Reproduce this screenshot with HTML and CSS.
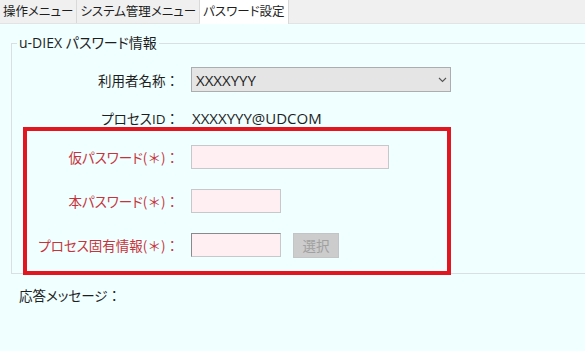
FILE: index.html
```html
<!DOCTYPE html>
<html lang="ja">
<head>
    <meta charset="UTF-8">
    <title>パスワード設定</title>
    <link rel="stylesheet" href="styles.css">
</head>
<body>
    <div class="tabs">
        <div class="tab">操作メニュー</div>
        <div class="tab">システム管理メニュー</div>
        <div class="tab active">パスワード設定</div>
    </div>
    <div class="page">
        <fieldset class="group">
            <legend>u-DIEX パスワード情報</legend>
            <div class="row first">
                <label class="label">利用者名称<span class="mark">：</span></label>
                <div class="select">
                    <span class="value">XXXXYYY</span>
                    <svg width="9" height="6" viewBox="0 0 9 6"><path d="M1 1l3.5 3.5L8 1" fill="none" stroke="#555" stroke-width="1.1"/></svg>
                </div>
            </div>
            <div class="row info">
                <span class="label">プロセスID<span class="mark">：</span></span>
                <span class="value">XXXXYYY@UDCOM</span>
            </div>
            <div class="required">
                <div class="row">
                    <label class="label red">仮パスワード<span class="mark">(＊)：</span></label>
                    <input class="input wide" type="password">
                </div>
                <div class="row">
                    <label class="label red">本パスワード<span class="mark">(＊)：</span></label>
                    <input class="input" type="password">
                </div>
                <div class="row">
                    <label class="label red">プロセス固有情報<span class="mark">(＊)：</span></label>
                    <input class="input inset" type="text">
                    <button class="btn" disabled>選択</button>
                </div>
            </div>
        </fieldset>
        <div class="message">応答メッセージ<span class="mark">：</span></div>
    </div>
</body>
</html>
```

FILE: styles.css
```css
/* password settings screen */
body {
    margin: 0;
    background-color: #f0ffff;
    color: #1e1e1e;
    font-family: "Open Sans", "Noto Sans CJK JP", sans-serif;
    font-size: 13.5px;
    font-feature-settings: "palt";
}

.tabs {
    display: flex;
    height: 23px;
    background-color: #f0f0f0;
    border-bottom: 1px solid #e3e3e3;
    font-size: 12.5px;
}

.tab {
    padding: 0 3px;
    line-height: 23px;
    border-right: 1px solid #d9d9d9;
}

.tab.active {
    background-color: #ffffff;
    height: 24px;
}

.page {
    padding: 0 0 0 11px;
}

.group {
    margin: 11px 0 0 0;
    padding: 0;
    border: 1px solid #d9e0e3;
    border-right: none;
    min-width: 0;
}

.group legend {
    padding: 0 2px;
    margin-left: 5px;
    line-height: 16px;
    font-size: 14px;
}

/* full-width colon and brackets keep their em width */
.mark {
    font-family: "Noto Sans CJK JP", sans-serif;
    font-feature-settings: normal;
}

.row {
    display: flex;
    align-items: center;
    height: 25px;
    margin-top: 13px;
}

.row.first {
    margin-top: 16px;
}

.row.info {
    height: 18px;
    margin-top: 17px;
}

.label {
    width: 167px;
    padding-right: 12px;
    text-align: right;
    flex: none;
}

.red {
    color: #c8323a;
}

.select {
    display: flex;
    align-items: center;
    justify-content: space-between;
    box-sizing: border-box;
    width: 260px;
    height: 25px;
    padding: 0 3px 0 3px;
    background-color: #e5e5e5;
    border: 1px solid #adadad;
}

.value {
    padding-left: 1px;
    font-size: 15px;
}

.required {
    margin: 0 0 -2px 11px;
    width: 420px;
    padding: 14px 0;
    border: 4px solid #e3161f;
}

.required .row {
    margin-top: 20px;
    height: 24px;
}

.required .row:first-child {
    margin-top: 0;
}

.required .label {
    width: 152px;
}

.input {
    box-sizing: border-box;
    width: 90px;
    height: 24px;
    margin: 0;
    background-color: #ffeef2;
    border: 1px solid #c8c8c8;
}

.input.wide {
    width: 198px;
}

.input.inset {
    border-top-color: #8a8a8a;
    border-left-color: #8a8a8a;
}

.btn {
    margin-left: 12px;
    width: 46px;
    height: 25px;
    font: inherit;
    color: #a0a0a0;
    background-color: #cccccc;
    border: 1px solid #c4c4c4;
}

.message {
    margin-top: 11px;
    padding-left: 8px;
}
```
